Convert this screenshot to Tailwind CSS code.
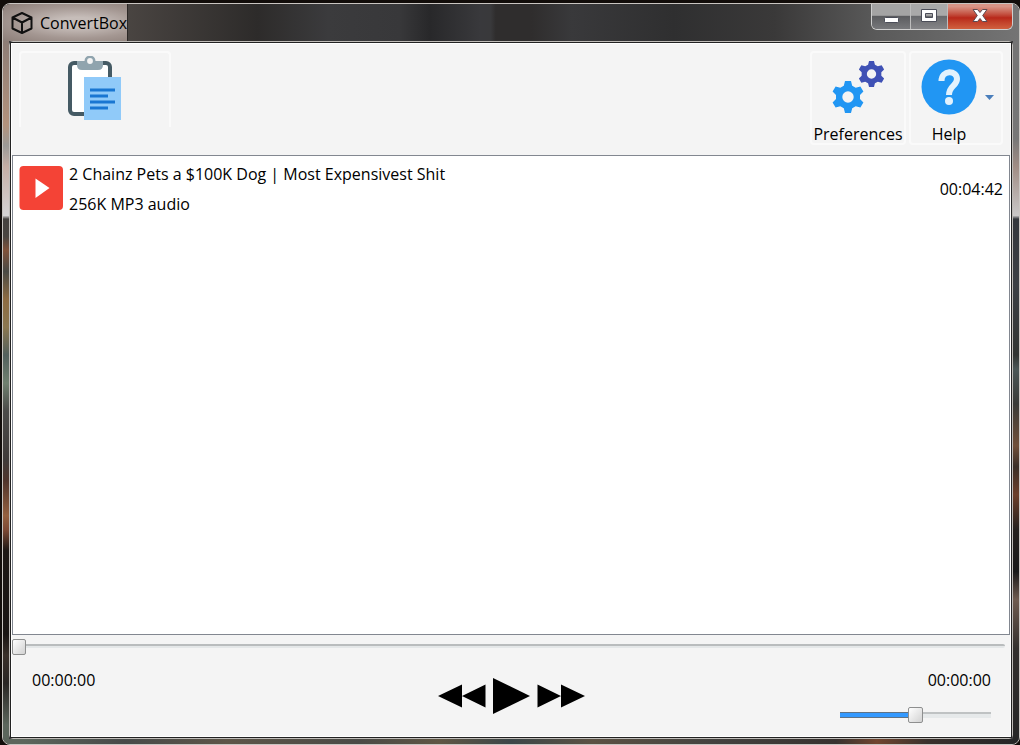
<!DOCTYPE html>
<html lang="en">
<head>
    <meta charset="UTF-8">
    <meta name="viewport" content="width=device-width, initial-scale=1.0">
    <title>ConvertBox</title>
    <script src="https://cdn.jsdelivr.net/npm/@tailwindcss/browser@4"></script>
</head>
<body class="h-screen overflow-hidden bg-[#120d0a] pt-[3px] pl-[2px] font-['Open_Sans','Noto_Sans',sans-serif] text-base text-black">
    <div class="flex h-full flex-col overflow-hidden rounded-lg border border-[#c9c5c1] bg-[#3a3a3c]">

        <!-- Title bar -->
        <header class="flex h-[37px] shrink-0 items-stretch bg-[linear-gradient(90deg,#4a4542_12%,#2d2b2a_25%,#3b3b3d_32%,#38383a_39%,#28282a_42%,#39393c_47%,#39393b_48%,#2f2d2d_48.500%,#2f2d2d_52%,#39393b_56%,#2f2f30_66%,#3a3939_76%,#5a5a5a_86%,#747474_100%)]">
            <div class="flex w-[125px] items-center gap-[7px] border-r border-[#2c2826] bg-[radial-gradient(ellipse_at_60%_50%,#c6bdb9_20%,#a49792_60%,#8c7e78_100%)] pl-2">
                <svg class="h-[22px] w-[22px] shrink-0" viewBox="0 0 22 22" fill="none" stroke="#111" stroke-width="2" stroke-linejoin="round">
                    <path d="M11 1 20.500 5.500V16.500L11 21 1.500 16.500V5.500ZM1.500 5.500 11 10.500 20.500 5.500M11 10.500V21"/>
                </svg>
                <h1 class="whitespace-nowrap leading-6">ConvertBox</h1>
            </div>
            <div class="mr-[6px] mb-[11px] ml-auto flex overflow-hidden rounded-b-md border border-t-0 border-[#cfcfcf]">
                <button type="button" aria-label="Minimize" class="flex w-[39px] items-center justify-center border-r border-[#bdbdbd] bg-linear-to-b from-[#a4a4a4] from-45% via-[#5c5d60] via-50% to-[#77787b]">
                    <svg class="h-4 w-5" viewBox="0 0 20 16"><rect x="3.500" y="8.500" width="14" height="5" rx="1" fill="#fff" stroke="#4b4d58"/></svg>
                </button>
                <button type="button" aria-label="Maximize" class="flex w-[37px] items-center justify-center border-r border-[#bdbdbd] bg-linear-to-b from-[#a9a9a9] from-45% via-[#696a6d] via-50% to-[#858588]">
                    <svg class="h-4 w-5" viewBox="0 0 20 16"><path fill="#fff" fill-rule="evenodd" stroke="#4b4d58" d="M2.500 .500H17.500V12.500H2.500ZM6.500 4.500V8.500H13.500V4.500Z"/></svg>
                </button>
                <button type="button" aria-label="Close" class="flex w-[64px] items-center justify-center bg-linear-to-b from-[#d79486] from-10% via-[#b8281a] via-55% to-[#d0603f]">
                    <svg class="h-4 w-5" viewBox="0 0 20 16"><path fill="#fff" stroke="#5b4a52" d="M3 .500H7.500L10 3.500 12.500 .500H17L12.700 6.500 17 12.500H12.500L10 9.500 7.500 12.500H3L7.300 6.500Z"/></svg>
                </button>
            </div>
        </header>

        <div class="flex min-h-0 grow">
            <div class="w-[6px] shrink-0 bg-[linear-gradient(180deg,#8d7d76,#b3927c_12%,#9b9996_15%,#c5aea5_18%,#d5d3d4_25%,#46423f_25.500%,#4a4540_28%,#80523a_30%,#4a4a45_33%,#8d6b42_37%,#8b7750_41%,#53605d_45%,#70806f_49%,#4c4b49_53%,#403b39_60%,#50352c_63%,#94603f_68%,#7e4a35_70%,#1d1815_73%,#1a1513_85%,#3a302a_88%,#2a2624_92%,#5c665c_98%)]"></div>

            <main class="flex min-w-0 grow flex-col rounded-sm border border-[#bfbcb8]">
                <div class="flex min-h-0 grow flex-col border border-[#222] bg-[#f4f4f4] shadow-[inset_0_0_0_1px_#fff]">

                    <!-- Toolbar -->
                    <div class="flex h-28 shrink-0 items-start justify-between px-2 pt-2">
                        <button type="button" aria-label="Paste link" class="flex h-[76px] w-[152px] justify-center rounded-t-sm border-2 border-b-0 border-[#fafafa] pt-[3px]">
                            <svg class="h-[66px] w-[54px]" viewBox="0 0 54 66">
                                <rect x="2" y="7" width="40" height="51" rx="4" fill="#fff" stroke="#455a64" stroke-width="4"/>
                                <path fill="#90a4ae" d="M9 5H35V9Q35 14 30 14H14Q9 14 9 9Z"/>
                                <circle cx="22" cy="5" r="4.200" fill="#f4f4f4" stroke="#90a4ae" stroke-width="2.600"/>
                                <rect x="16" y="21" width="37" height="43" fill="#90caf9"/>
                                <path stroke="#1976d2" stroke-width="3" d="M22 34H47M22 40H40M22 46H47M22 52H40"/>
                            </svg>
                        </button>
                        <div class="flex gap-[3px]">
                            <button type="button" class="flex h-[94px] w-[96px] flex-col items-center rounded-sm border-2 border-[#fafafa]">
                                <svg class="h-[69px] w-[68px] shrink-0" viewBox="0 0 68 69">
                                    <defs>
                                        <path id="gear" fill-rule="evenodd" d="M-3-16H3L4.200-11.300 7.700-9.300 12.400-10.600 15.400-5.400 12-2V2L15.400 5.400 12.400 10.600 7.700 9.300 4.200 11.300 3 16H-3L-4.200 11.300-7.700 9.300-12.400 10.600-15.400 5.400-12 2V-2L-15.400-5.400-12.400-10.600-7.700-9.300-4.200-11.300ZM0-5.700A5.700 5.700 0 1 0 0 5.700A5.700 5.700 0 1 0 0-5.700Z"/>
                                    </defs>
                                    <use href="#gear" transform="translate(24 44)" fill="#2196f3"/>
                                    <use href="#gear" transform="translate(47.500 21) scale(.82)" fill="#3f51b5"/>
                                </svg>
                                <span class="leading-6">Preferences</span>
                            </button>
                            <button type="button" class="flex h-[94px] w-[94px] items-start rounded-sm border-2 border-[#fafafa] pl-[10px]">
                                <span class="flex flex-col items-center">
                                    <svg class="h-[69px] w-14 shrink-0" viewBox="0 0 56 69">
                                        <circle cx="28" cy="34" r="27.500" fill="#2196f3"/>
                                        <path fill="none" stroke="#e3f2fd" stroke-width="6" d="M20.500 28C20.500 16.500 36 17 36 26C36 33 28 32.500 28 42"/>
                                        <circle cx="28" cy="48" r="4" fill="#e3f2fd"/>
                                    </svg>
                                    <span class="leading-6">Help</span>
                                </span>
                                <svg class="mt-[42px] ml-2 h-[5px] w-[9px]" viewBox="0 0 9 5"><path fill="#4a7ebb" d="M0 0H9L4.500 5Z"/></svg>
                            </button>
                        </div>
                    </div>

                    <!-- Track list -->
                    <ul class="mr-px ml-px min-h-0 grow border border-[#828790] bg-white">
                        <li class="flex items-start px-[6px] pt-[3px]">
                            <svg class="mt-[6px] h-[46px] w-11 shrink-0" viewBox="0 0 44 46">
                                <rect x="0.500" y="1" width="43.500" height="44" rx="4" fill="#f44336"/>
                                <path fill="#fff" d="M16.500 13.500V33L30.500 23Z"/>
                            </svg>
                            <div class="ml-[6px] min-w-0 grow leading-[30px]">
                                <p>2 Chainz Pets a $100K Dog | Most Expensivest Shit</p>
                                <p>256K MP3 audio</p>
                            </div>
                            <time class="self-center leading-[30px]">00:04:42</time>
                        </li>
                    </ul>

                    <!-- Player -->
                    <div class="h-[102px] shrink-0 pl-px">
                        <input id="seek" aria-label="Seek" type="range" min="0" max="282" value="0" class="mt-[3px] block h-4 w-[calc(100%-6px)] appearance-none bg-transparent [&::-webkit-slider-runnable-track]:h-1 [&::-webkit-slider-runnable-track]:rounded-xs [&::-webkit-slider-runnable-track]:border-t-2 [&::-webkit-slider-runnable-track]:border-[#b9bcbd] [&::-webkit-slider-runnable-track]:bg-[#e4e7e8] [&::-webkit-slider-thumb]:-mt-[7px] [&::-webkit-slider-thumb]:h-4 [&::-webkit-slider-thumb]:w-[14px] [&::-webkit-slider-thumb]:appearance-none [&::-webkit-slider-thumb]:rounded-xs [&::-webkit-slider-thumb]:border [&::-webkit-slider-thumb]:border-[#8e8f8f] [&::-webkit-slider-thumb]:bg-linear-to-br [&::-webkit-slider-thumb]:from-white [&::-webkit-slider-thumb]:to-[#d2d2d2]">
                        <div class="grid grid-cols-[1fr_auto_1fr] items-start px-5 pt-[10px]">
                            <time class="pt-1 leading-6">00:00:00</time>
                            <div class="flex items-center gap-[6px] pt-[14px]">
                                <button type="button" aria-label="Previous">
                                    <svg class="block h-9 w-12" viewBox="0 0 48 36"><path d="M0 18 24 6.500V29.500ZM24 18 47.500 6.500V29.500Z"/></svg>
                                </button>
                                <button type="button" aria-label="Play">
                                    <svg class="block h-9 w-[39px]" viewBox="0 0 39 36"><path d="M1 0V36L38 18Z"/></svg>
                                </button>
                                <button type="button" aria-label="Next">
                                    <svg class="block h-9 w-12" viewBox="0 0 48 36"><path d="M.500 6.500 24 18 .500 29.500ZM24 6.500 48 18 24 29.500Z"/></svg>
                                </button>
                            </div>
                            <div class="flex flex-col items-end pt-1">
                                <time class="leading-6">00:00:00</time>
                                <input id="volume" aria-label="Volume" type="range" min="0" max="100" value="50" style="--fill: 50%" class="mt-[15px] block h-4 w-[151px] appearance-none bg-transparent [&::-webkit-slider-runnable-track]:h-[6px] [&::-webkit-slider-runnable-track]:[background:linear-gradient(180deg,#5f7285_17%,#3399ff_17%,#3399ff_83%,#5f7285_83%)_0_0/var(--fill)_100%_no-repeat,linear-gradient(180deg,#bfc2c3_33%,#e6e9ea_33%)] [&::-webkit-slider-thumb]:-mt-[5px] [&::-webkit-slider-thumb]:h-4 [&::-webkit-slider-thumb]:w-[15px] [&::-webkit-slider-thumb]:appearance-none [&::-webkit-slider-thumb]:rounded-xs [&::-webkit-slider-thumb]:border [&::-webkit-slider-thumb]:border-[#8e8f8f] [&::-webkit-slider-thumb]:bg-linear-to-br [&::-webkit-slider-thumb]:from-white [&::-webkit-slider-thumb]:to-[#d2d2d2]">
                            </div>
                        </div>
                    </div>
                </div>
            </main>

            <div class="w-[6px] shrink-0 bg-[linear-gradient(180deg,#747474_5%,#777_14%,#a08d85_18%,#c9c7c7_25%,#34373c_25.500%,#3c4045_35%,#323533_45%,#4b5757_47%,#3a3b38_52%,#70503a_58%,#3a2f27_61%,#6c402b_65%,#25211e_70%,#191919_76%,#6f5c50_80%,#33302e_87%,#262626_100%)]"></div>
        </div>

        <div class="h-[5px] shrink-0 bg-[linear-gradient(90deg,#5c665c_2%,#474a49_12%,#5d5548_22%,#4a4a46_35%,#5f5644_43%,#3c4648_50%,#5b5143_58%,#43423f_70%,#37322f_82%,#70452f_86%,#39302c_91%,#242526_100%)]"></div>
    </div>

    <script>
        // keep the blue part of the volume track under the thumb
        const volume = document.getElementById('volume');
        volume.addEventListener('input', () => {
            volume.style.setProperty('--fill', `${volume.value}%`);
        });
    </script>
</body>
</html>
